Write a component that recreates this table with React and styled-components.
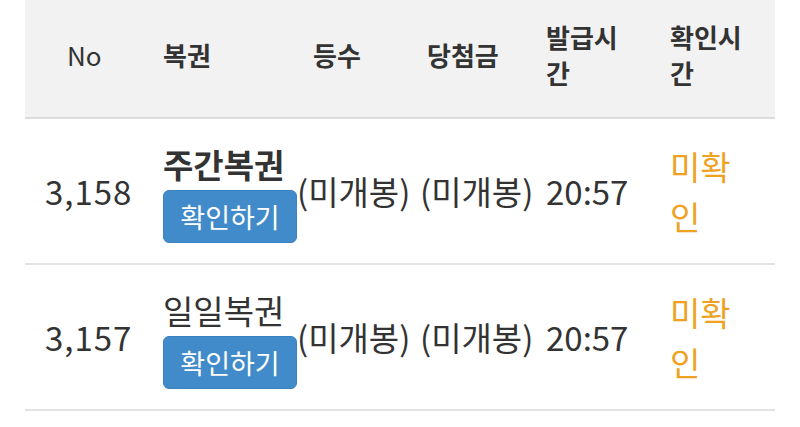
import React from 'react';
import styled, { createGlobalStyle } from 'styled-components';

const GlobalStyle = createGlobalStyle`
    html, body {
        margin: 0;
        padding: 0;
        background: #fff;
        font-family: "Noto Sans CJK KR", "Noto Sans", sans-serif;
        color: #333;
    }
`;

const COLUMNS = '130px 142px 123px 126px 124px 105px';

const Table = styled.div`
    width: 750px;
    margin-left: 25px;
`;

const HeadRow = styled.div`
    box-sizing: border-box;
    display: grid;
    grid-template-columns: ${ COLUMNS };
    align-items: center;
    height: 119px;
    padding-bottom: 7px;
    background: #f2f2f2;
    border-bottom: 2px solid #dcdcdc;
`;

const HeadCell = styled.div`
    padding-left: ${ p => p.pad || 0 }px;
    max-width: ${ p => p.wrap ? `${ p.wrap }px` : 'none' };
    font-size: 26px;
    line-height: 36px;
    font-weight: ${ p => p.light ? 400 : 700 };
    color: #333;
`;

const BodyRow = styled.div`
    display: grid;
    grid-template-columns: ${ COLUMNS };
    align-items: center;
    height: 144px;
    border-bottom: 2px solid #e3e3e3;
`;

const Cell = styled.div`
    padding-left: ${ p => p.pad || 0 }px;
    max-width: ${ p => p.wrap ? `${ p.wrap }px` : 'none' };
    font-size: 33px;
    line-height: 50px;
    letter-spacing: ${ p => p.num ? '1px' : 'normal' };
    color: ${ p => p.warn ? '#eea21f' : '#333' };
    white-space: ${ p => p.wrap ? 'normal' : 'nowrap' };
`;

const Ticket = styled.div`
    display: flex;
    flex-direction: column;
    align-items: flex-start;
    padding-left: 8px;
`;

const TicketName = styled.div`
    font-size: 33px;
    line-height: 48px;
    font-weight: ${ p => p.bold ? 700 : 400 };
    white-space: nowrap;
`;

const CheckButton = styled.button`
    margin-top: 2px;
    width: 134px;
    height: 53px;
    padding: 0;
    border: 1px solid #3a82c2;
    border-radius: 6px;
    background: #428bca;
    color: #fff;
    font-family: inherit;
    font-size: 27px;
    line-height: 1;
`;

const rows = [
    { no: '3,158', name: '주간복권', bold: true },
    { no: '3,157', name: '일일복권', bold: false }
];

export default function App() {
    return (
        <>
          <GlobalStyle />
          <Table>
            <HeadRow>
              <HeadCell pad={ 42 } light>No</HeadCell>
              <HeadCell pad={ 8 }>복권</HeadCell>
              <HeadCell pad={ 16 }>등수</HeadCell>
              <HeadCell pad={ 7 }>당첨금</HeadCell>
              <HeadCell wrap={ 82 }>발급시간</HeadCell>
              <HeadCell wrap={ 82 }>확인시간</HeadCell>
            </HeadRow>
            {
                rows.map( function( { no, name, bold }, i ) {
                    return (
                        <BodyRow key={ i }>
                          <Cell pad={ 20 } num>{ no }</Cell>
                          <Ticket>
                            <TicketName bold={ bold }>{ name }</TicketName>
                            <CheckButton>확인하기</CheckButton>
                          </Ticket>
                          <Cell>(미개봉)</Cell>
                          <Cell>(미개봉)</Cell>
                          <Cell>20:57</Cell>
                          <Cell wrap={ 72 } warn>미확인</Cell>
                        </BodyRow>
                    );
                })
            }
          </Table>
        </>
    );
}
